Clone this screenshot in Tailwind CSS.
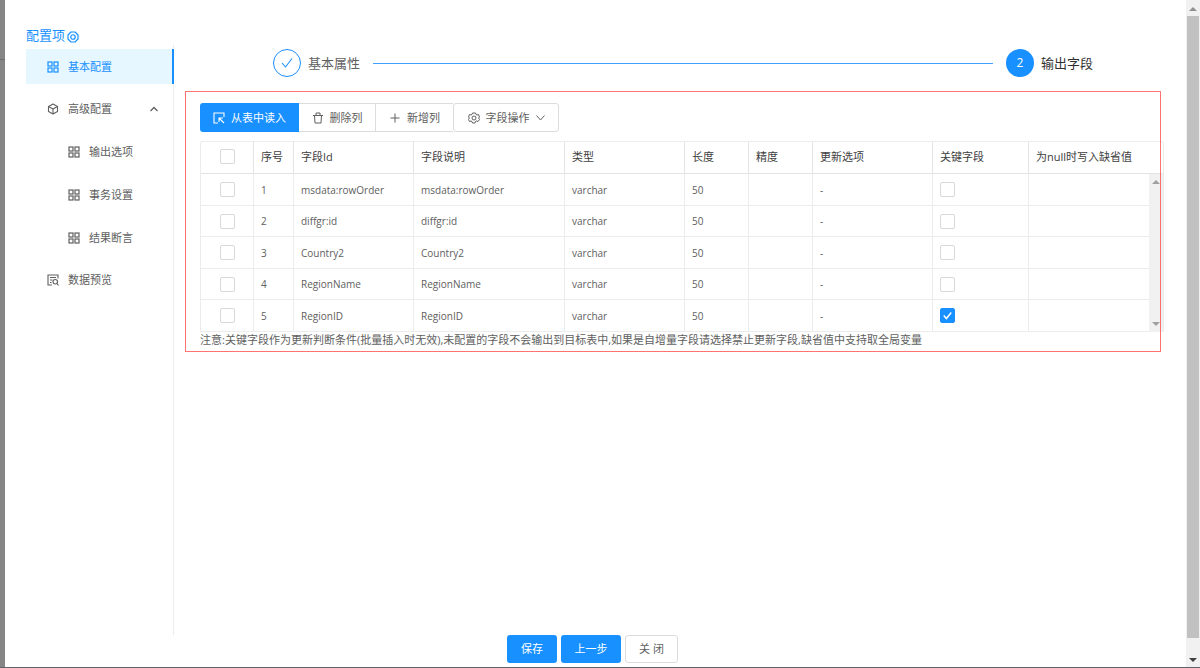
<!DOCTYPE html>
<html lang="zh-CN">
<head>
<meta charset="utf-8">
<meta name="viewport" content="width=device-width, initial-scale=1">
<title>输出字段配置</title>
<script src="https://cdn.jsdelivr.net/npm/@tailwindcss/browser@4"></script>
</head>
<body class="flex min-h-screen bg-white font-['Open_Sans','Noto_Sans_CJK_SC',sans-serif] text-[11px] leading-4 text-[#606060]">
<svg class="hidden" aria-hidden="true">
  <symbol id="grid" viewBox="0 0 24 24"><g fill="none" stroke="currentColor" stroke-width="2.400"><rect x="2" y="2" width="8" height="8"/><rect x="14" y="2" width="8" height="8"/><rect x="2" y="14" width="8" height="8"/><rect x="14" y="14" width="8" height="8"/></g></symbol>
  <symbol id="tick" viewBox="0 0 24 24"><path d="M2 12l7 8L22 3" fill="none" stroke="currentColor" stroke-width="2.200"/></symbol>
  <symbol id="arrow" viewBox="0 0 8 4"><path d="M0 4L4 0l4 4z" fill="currentColor"/></symbol>
</svg>
<div class="w-[5px] shrink-0 border-b border-[#606468] bg-[#858585]"><div class="h-[60px] border-b border-[#6c6c6c]"></div></div>
<div class="flex min-w-0 flex-1 flex-col border-b border-[#606468]">
  <div class="flex flex-1 pl-[21px]">
    <aside class="flex w-[148px] shrink-0 flex-col pt-[25px]">
      <a href="#" class="flex h-5 items-center gap-[2px] text-[13px] leading-5 text-[#1890ff]">配置项
        <svg class="mt-[3px] size-3" viewBox="0 0 24 24" fill="none" stroke="currentColor" stroke-width="2.400"><path d="M8 2h8l6 6v8l-6 6H8l-6-6V8z" stroke-linejoin="round"/><circle cx="12" cy="12" r="4.500"/></svg>
      </a>
      <nav class="flex-1 border-r border-[#ececec] pt-1">
        <ul class="-mr-px flex h-[249px] flex-col justify-between">
          <li><a href="#" class="flex h-[35px] items-center gap-[9px] border-r-2 border-[#1890ff] bg-[#e6f7ff] pl-[21px] text-[#1890ff]"><svg class="size-3"><use href="#grid"/></svg>基本配置</a></li>
          <li><a href="#" class="flex h-[35px] items-center gap-[9px] pl-[21px] pr-4"><svg class="size-3" viewBox="0 0 24 24" fill="none" stroke="currentColor" stroke-width="2.200" stroke-linejoin="round"><path d="M12 2l9 5v10l-9 5-9-5V7zM3 7l9 5 9-5M12 12v10"/></svg>高级配置<svg class="ml-auto h-[6px] w-[8px]" viewBox="0 0 16 12" fill="none" stroke="currentColor" stroke-width="2.500"><path d="M1 10l7-7 7 7"/></svg></a></li>
          <li><a href="#" class="flex h-[35px] items-center gap-[9px] pl-[42px]"><svg class="size-3"><use href="#grid"/></svg>输出选项</a></li>
          <li><a href="#" class="flex h-[35px] items-center gap-[9px] pl-[42px]"><svg class="size-3"><use href="#grid"/></svg>事务设置</a></li>
          <li><a href="#" class="flex h-[35px] items-center gap-[9px] pl-[42px]"><svg class="size-3"><use href="#grid"/></svg>结果断言</a></li>
          <li><a href="#" class="flex h-[35px] items-center gap-[9px] pl-[21px]"><svg class="size-3" viewBox="0 0 24 24" fill="none" stroke="currentColor" stroke-width="2.200"><path d="M22 9V2H2v20h8M6 7h12M6 12h5M6 17h3M20 19l3 4"/><circle cx="16.500" cy="15.500" r="4.500"/></svg>数据预览</a></li>
        </ul>
      </nav>
    </aside>
    <main class="min-w-0 flex-1 pl-[11px] pr-[25px] pt-[49px]">
      <ol class="flex h-7 items-center pl-[88px] pr-[68px] text-[13px]">
        <li class="flex flex-1 items-center"><span class="flex size-7 items-center justify-center rounded-full border border-[#1890ff] text-[#1890ff]"><svg class="size-3"><use href="#tick"/></svg></span><span class="ml-[7px]">基本属性</span><span class="mx-[13px] h-px flex-1 bg-[#40a0ff]"></span></li>
        <li class="flex items-center text-[#303030]"><span class="flex size-7 items-center justify-center rounded-full bg-[#1890ff] text-xs text-white">2</span><span class="ml-[7px]">输出字段</span></li>
      </ol>
      <section class="relative mt-[14px] h-[261px] pl-[15px] pt-3">
        <div class="flex h-[29px]">
          <button class="flex w-[99px] items-center justify-center gap-[6px] rounded-l-[3px] bg-[#1890ff] text-white"><svg class="size-3" viewBox="0 0 24 24" fill="none" stroke="currentColor" stroke-width="2.200"><path d="M22 10V2H2v20h8M12 12l10 10M12 20v-8h8"/></svg>从表中读入</button>
          <button class="flex w-[77px] items-center justify-center gap-[6px] border-y border-r border-[#dcdcdc]"><svg class="size-3" viewBox="0 0 24 24" fill="none" stroke="currentColor" stroke-width="2"><path d="M2 7h20M8 7V2h8v5M5 7l1 15h12l1-15"/></svg>删除列</button>
          <button class="flex w-[77px] items-center justify-center gap-[6px] border-y border-[#dcdcdc]"><svg class="size-3" viewBox="0 0 24 24" fill="none" stroke="currentColor" stroke-width="2"><path d="M12 3v18M3 12h18"/></svg>新增列</button>
          <button class="flex w-[106px] items-center justify-center gap-[6px] rounded-[3px] border border-[#dcdcdc]"><svg class="size-3" viewBox="0 0 24 24" fill="none" stroke="currentColor" stroke-width="2" stroke-linejoin="round"><path d="M9 2h6l1 3 2 1 3-1 2 5-2 2 2 3-3 4-3-1-2 1-1 3H9l-1-3-2-1-3 1-2-4 2-3-2-2 2-5 3 1 2-1z"/><circle cx="12" cy="12" r="4"/></svg>字段操作<svg class="h-[6px] w-[9px]" viewBox="0 0 18 12" fill="none" stroke="currentColor" stroke-width="2"><path d="M1 1l8 9 8-9"/></svg></button>
        </div>
        <div class="-mr-[3px] mt-[9px] overflow-hidden rounded-t-[3px] border-l border-r border-t border-[#ececec]">
          <table class="w-full table-fixed border-separate border-spacing-0 text-left [&_td]:border-b [&_td]:border-r [&_td]:border-[#ececec] [&_td]:px-[7px] [&_td]:text-[10px] [&_th]:h-8 [&_th]:border-b [&_th]:border-r [&_th]:border-[#e4e4e4] [&_th]:px-[7px] [&_th]:pb-[2px] [&_th]:font-normal [&_th]:text-[#404040]">
            <colgroup><col class="w-[53px]"><col class="w-[40px]"><col class="w-[120px]"><col class="w-[151px]"><col class="w-[120px]"><col class="w-[64px]"><col class="w-[64px]"><col class="w-[120px]"><col class="w-[96px]"><col><col class="w-[14px]"></colgroup>
            <thead><tr><th><input type="checkbox" aria-label="全选" class="mx-auto block size-[15px] appearance-none rounded-[2px] border border-[#d9d9d9]"></th><th>序号</th><th>字段Id</th><th>字段说明</th><th>类型</th><th>长度</th><th>精度</th><th>更新选项</th><th>关键字段</th><th class="border-r-0! pr-0! whitespace-nowrap">为null时写入缺省值</th><th class="border-r-0! p-0!"></th></tr></thead>
            <tbody id="rows"></tbody>
          </table>
        </div>
        <p>注意:关键字段作为更新判断条件(批量插入时无效),未配置的字段不会输出到目标表中,如果是自增量字段请选择禁止更新字段,缺省值中支持取全局变量</p>
        <div class="pointer-events-none absolute inset-0 border border-[#ff2828]/65"></div>
      </section>
    </main>
  </div>
  <footer class="flex h-8 shrink-0 justify-center gap-1 pb-1 pr-[6px]">
    <button class="h-7 w-[50px] rounded-[3px] bg-[#1890ff] text-white">保存</button>
    <button class="h-7 w-[60px] rounded-[3px] bg-[#1890ff] text-white">上一步</button>
    <button class="h-7 w-[53px] rounded-[3px] border border-[#dcdcdc]">关 闭</button>
  </footer>
</div>
<div class="flex w-[14px] shrink-0 flex-col items-center border-b border-[#606468] bg-[#f1f1f1]">
  <svg class="mb-[5px] mt-[7px] h-1 w-2 shrink-0 text-[#909090]"><use href="#arrow"/></svg>
  <div class="w-3 flex-1 bg-[#c1c1c1]"></div>
  <svg class="mb-[5px] mt-[20px] h-1 w-2 shrink-0 rotate-180 text-[#404040]"><use href="#arrow"/></svg>
</div>
<script>
const names = ['msdata:rowOrder', 'diffgr:id', 'Country2', 'RegionName', 'RegionID'];
const box = 'block size-[15px] appearance-none rounded-[2px] border border-[#d9d9d9] checked:border-[#1890ff] checked:bg-[#1890ff]';
document.getElementById('rows').innerHTML = names.map((n, i) => `<tr class="odd:h-[32px] even:h-[31px]">
<td><input type="checkbox" aria-label="选择 ${n}" class="mx-auto ${box}"></td><td>${i + 1}</td><td>${n}</td><td>${n}</td><td>varchar</td><td>50</td><td></td><td>-</td>
<td><span class="relative block size-[15px]"><input type="checkbox" aria-label="关键字段 ${n}" class="peer ${box}" ${i === 4 ? 'checked' : ''}><svg class="pointer-events-none absolute inset-[3px] hidden size-[9px] text-white peer-checked:block" viewBox="0 0 24 24"><path d="M2 12l7 8L22 4" fill="none" stroke="currentColor" stroke-width="4"/></svg></span></td>
<td class="border-r-0!"></td>${i ? '' : `<td rowspan="5" class="h-px border-0! bg-[#f1f1f1] p-0!"><div class="flex h-[158px] flex-col items-center justify-between py-[6px] text-[#a0a0a0]"><svg class="h-1 w-2"><use href="#arrow"/></svg><svg class="h-1 w-2 rotate-180"><use href="#arrow"/></svg></div></td>`}</tr>`).join('');
</script>
</body>
</html>
